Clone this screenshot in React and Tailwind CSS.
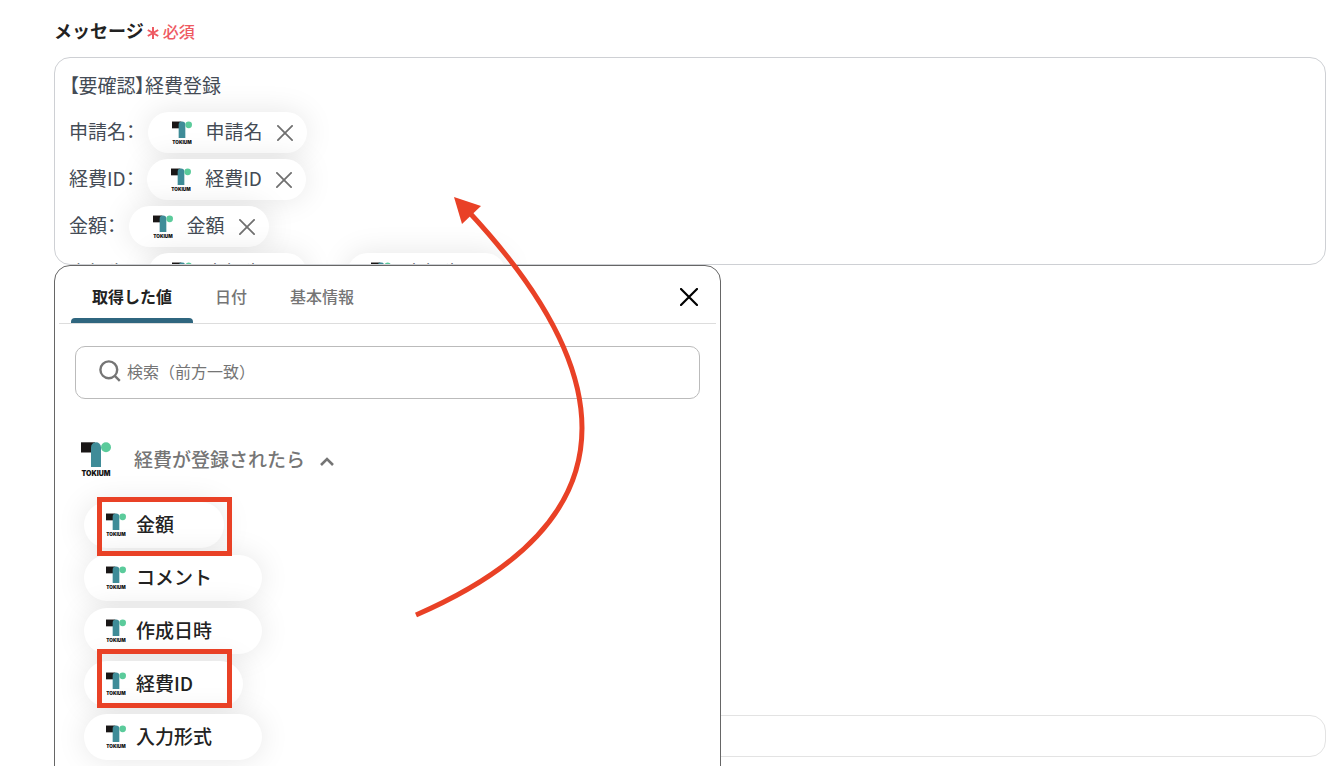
import React, { useState } from "react";

const fields = ["金額", "コメント", "作成日時", "経費ID", "入力形式"];

const tabs = ["取得した値", "日付", "基本情報"];

const messageRows = [
  { label: "申請名：", tags: ["申請名"] },
  { label: "経費ID：", tags: ["経費ID"] },
  { label: "金額：", tags: ["金額"] },
  { label: "支払先：", tags: ["支払先", "支払先"] },
];

const TokiumLogo = ({ className }) => (
  <svg viewBox="0 0 30 35" className={className} aria-hidden="true">
    <rect x="0" y="0.3" width="14" height="10.2" fill="#1a1717" />
    <path d="M10 25V5.3a5 5 0 0 1 10 0V25z" fill="#3f8c98" />
    <circle cx="25" cy="5.2" r="5" fill="#5bcb9b" />
    <text
      x="15"
      y="34.2"
      textAnchor="middle"
      fontFamily="Inter, sans-serif"
      fontWeight="900"
      fontSize="7"
      fill="#111"
    >
      TOKIUM
    </text>
  </svg>
);

const CrossIcon = ({ className, strokeWidth }) => (
  <svg viewBox="0 0 18 18" className={className} fill="none" stroke="currentColor" strokeWidth={strokeWidth} strokeLinecap="round">
    <path d="M1 1l16 16M17 1L1 17" />
  </svg>
);

const MessageTag = ({ name }) => (
  <span className="flex h-[41px] items-center rounded-full bg-white pl-6 pr-3.5 shadow-[0_0_30px_rgba(0,0,0,0.1)]">
    <TokiumLogo className="mr-3.5 h-6 w-5" />
    <span className="pb-0.5">{name}</span>
    <button type="button" aria-label={`${name}を削除`} className="ml-3.5 text-[#707070]">
      <CrossIcon className="size-4" strokeWidth="2" />
    </button>
  </span>
);

const Annotations = () => (
  <svg
    viewBox="0 0 1328 766"
    className="pointer-events-none absolute left-0 top-0 z-20 h-[766px] w-[1328px] max-w-none"
    fill="none"
    stroke="#e94126"
    strokeWidth="5"
    aria-hidden="true"
  >
    <rect x="99.5" y="499.5" width="130" height="54" />
    <rect x="99.5" y="651.5" width="130" height="54" />
    <path d="M416 615C522 569 582 508 582 428C582 360 538 286 468 211" />
    <path d="M454 197l27 9-19 18z" fill="#e94126" stroke="none" />
  </svg>
);

const ValuePicker = () => {
  const [activeTab, setActiveTab] = useState(tabs[0]);
  const [open, setOpen] = useState(true);

  return (
    <div className="absolute left-0 top-full z-10 h-[540px] w-[667px] rounded-2xl border border-[#666] bg-white">
      <div className="mx-1 flex h-[58px] items-stretch border-b border-[#ddd] pl-3 pr-[18px]">
        <div role="tablist" className="flex gap-px">
          {tabs.map((tab) => (
            <button
              key={tab}
              type="button"
              role="tab"
              aria-selected={tab === activeTab}
              onClick={() => setActiveTab(tab)}
              className={
                tab === activeTab
                  ? "relative px-[21px] pt-0.5 font-bold text-[#222]"
                  : "px-[21px] pt-0.5 font-medium text-[#757575]"
              }
            >
              {tab}
              {tab === activeTab && (
                <span className="absolute inset-x-0 bottom-0 h-[5px] rounded-t bg-[#2f667f]" />
              )}
            </button>
          ))}
        </div>
        <button type="button" aria-label="閉じる" className="ml-auto pt-1 text-black">
          <CrossIcon className="size-[18px]" strokeWidth="2.2" />
        </button>
      </div>

      <label className="mx-5 mt-[22px] flex h-[53px] items-center rounded-[10px] border border-[#bbb] pb-[3px] pl-[23px]">
        <svg viewBox="0 0 22 22" className="mr-1.5 size-[22px] text-[#757575]" fill="none" stroke="currentColor" strokeWidth="2.4">
          <circle cx="9.8" cy="9.8" r="8.4" />
          <path d="M15.8 15.8l5 5" />
        </svg>
        <input
          type="text"
          aria-label="検索"
          placeholder="検索（前方一致）"
          className="min-w-0 flex-1 outline-none placeholder:text-[#757575]"
        />
      </label>

      <button
        type="button"
        onClick={() => setOpen(!open)}
        className="ml-[26px] mt-[42px] flex h-9 items-center text-[19px] font-medium text-[#757575]"
      >
        <TokiumLogo className="mr-[23px] h-[35px] w-[30px]" />
        <span>経費が登録されたら</span>
        <svg viewBox="0 0 14 9" className="ml-[15px] mt-1 h-[9px] w-3.5" fill="none" stroke="currentColor" strokeWidth="2.6">
          <path d="M1 8l6-6 6 6" />
        </svg>
      </button>

      {open && (
        <ul className="ml-[29px] mt-[25px] flex flex-col items-start gap-[7px]">
          {fields.map((name) => (
            <li key={name}>
              <button
                type="button"
                className="flex h-[46px] items-center rounded-full bg-white pl-[22px] pr-[50px] text-[19px] font-medium text-[#222] shadow-[0_0_30px_rgba(0,0,0,0.1)]"
              >
                <TokiumLogo className="mr-2.5 h-6 w-5" />
                <span className="pb-0.5">{name}</span>
              </button>
            </li>
          ))}
        </ul>
      )}
    </div>
  );
};

const App = () => {
  return (
    <main className="relative h-screen overflow-hidden bg-white pl-[54px] pr-0.5 font-['Noto_Sans_CJK_JP',sans-serif] text-base">
      <div className="flex h-[57px] items-center pt-0.5">
        <span id="message-label" className="text-lg font-bold text-[#222]">
          メッセージ
        </span>
        <span className="ml-[3px] flex items-center gap-1 pt-0.5 font-medium text-[#ee5a62]">
          <svg viewBox="0 0 12 12" className="mt-1 size-3" stroke="currentColor" strokeWidth="2">
            <path d="M6 0v12M0.8 3l10.4 6M11.2 3L0.8 9" />
          </svg>
          必須
        </span>
      </div>

      <div className="relative">
        <div
          role="textbox"
          aria-multiline="true"
          aria-labelledby="message-label"
          tabIndex={0}
          className="h-52 overflow-hidden rounded-2xl border border-[#ced0d4] px-3.5 pt-3 text-[19px] text-[#444b55] [font-feature-settings:'palt']"
        >
          <p className="mb-[13px] leading-[29px]">【要確認】経費登録</p>
          {messageRows.map((row, i) => (
            <div key={i} className="mb-1.5 flex h-[41px] items-center gap-3">
              <span className="pb-[3px]">{row.label}</span>
              <span className="flex gap-10">
                {row.tags.map((name, j) => (
                  <MessageTag key={j} name={name} />
                ))}
              </span>
            </div>
          ))}
        </div>
        <ValuePicker />
      </div>

      <input
        type="text"
        aria-label="補足"
        className="mt-[450px] block h-[42px] w-full rounded-2xl border border-[#e3e3e3] px-4 outline-none"
      />
      <Annotations />
    </main>
  );
};

export default App;
